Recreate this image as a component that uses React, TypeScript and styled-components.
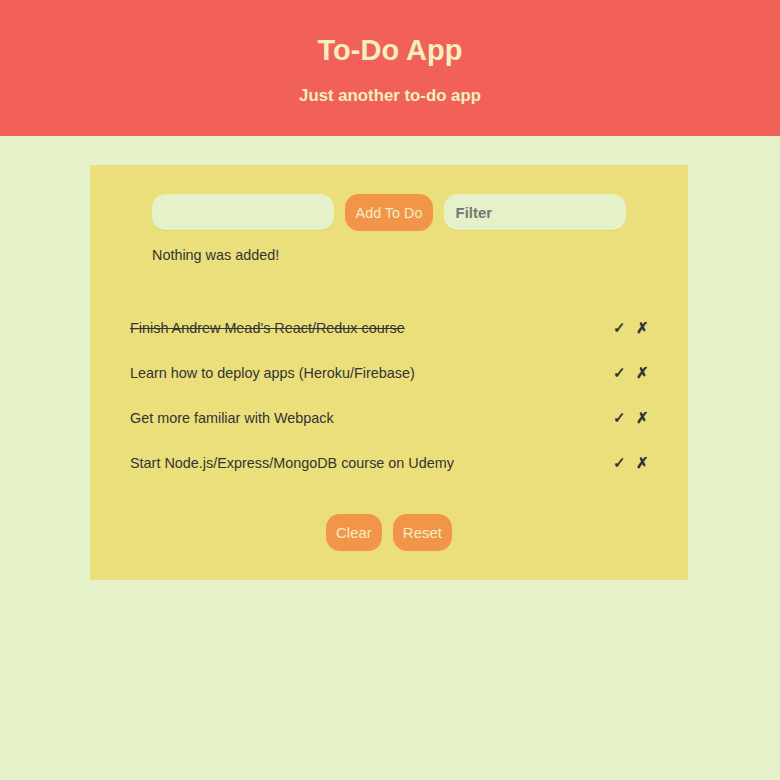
import React from 'react';
import styled, { createGlobalStyle } from 'styled-components';

const GlobalStyle = createGlobalStyle`
  body {
    margin: 0;
    background-color: #e5f1c9;
    font-family: "Liberation Sans", Arial, sans-serif;
    color: #333333;
  }
`;

const Header = styled.header`
  background-color: #f26157;
  color: #f5eec2;
  text-align: center;
  height: 136px;
  padding-top: 34px;
  box-sizing: border-box;
`;

const Title = styled.h1`
  margin: 0;
  font-size: 29px;
  font-weight: bold;
  line-height: 33px;
`;

const Subtitle = styled.h2`
  margin: 19px 0 0;
  font-size: 16.8px;
  font-weight: bold;
  line-height: 20px;
`;

const Panel = styled.main`
  width: 598px;
  margin: 29px 92px 0 90px;
  background-color: #ebdf7c;
  padding: 29px 40px;
  box-sizing: border-box;
`;

const FormRow = styled.form`
  display: flex;
  justify-content: center;
  gap: 11px;
`;

const Field = styled.input`
  width: 182px;
  height: 37px;
  box-sizing: border-box;
  border: none;
  border-bottom: 1px solid #e6d46a;
  border-radius: 14px;
  background-color: #e5f1c9;
  padding: 0 11px;
  font-family: inherit;
  font-size: 15px;
  font-weight: bold;
  color: #333333;
  outline: none;

  &::placeholder {
    color: #777777;
  }
`;

const Button = styled.button<{ $small?: boolean }>`
  height: 37px;
  padding: 0 ${(props): string => (props.$small ? '11px' : '10px')};
  border: none;
  border-radius: 14px;
  background-color: #f19549;
  color: #f5eec2;
  font-family: inherit;
  font-size: ${(props): string => (props.$small ? '14.4px' : '15px')};
  cursor: pointer;
`;

const Message = styled.p`
  margin: 15px 0 0 22px;
  font-size: 14.4px;
  line-height: 18px;
`;

const List = styled.ul`
  list-style: none;
  margin: 55px 0 0;
  padding: 0;
  display: flex;
  flex-direction: column;
  gap: 27px;
`;

const Item = styled.li`
  display: flex;
  justify-content: space-between;
  align-items: center;
  font-size: 14.4px;
  line-height: 18px;
`;

const ItemText = styled.span<{ $done: boolean }>`
  text-decoration: ${(props): string => (props.$done ? 'line-through' : 'none')};
`;

const Actions = styled.span`
  display: flex;
  gap: 11px;
  font-size: 15px;
  font-weight: bold;
`;

const Mark = styled.span`
  width: 12px;
  text-align: center;
`;

const Footer = styled.div`
  display: flex;
  justify-content: center;
  gap: 11px;
  margin-top: 42px;
`;

const todos = [
  { text: "Finish Andrew Mead's React/Redux course", done: true },
  { text: 'Learn how to deploy apps (Heroku/Firebase)', done: false },
  { text: 'Get more familiar with Webpack', done: false },
  { text: 'Start Node.js/Express/MongoDB course on Udemy', done: false },
];

const App: React.FC = () => (
  <>
    <GlobalStyle />
    <Header>
      <Title>To-Do App</Title>
      <Subtitle>Just another to-do app</Subtitle>
    </Header>
    <Panel>
      <FormRow onSubmit={(e): void => e.preventDefault()}>
        <Field type="text" />
        <Button type="submit" $small>
          Add To Do
        </Button>
        <Field type="text" placeholder="Filter" />
      </FormRow>
      <Message>Nothing was added!</Message>
      <List>
        {todos.map((todo) => (
          <Item key={todo.text}>
            <ItemText $done={todo.done}>{todo.text}</ItemText>
            <Actions>
              <Mark>✓</Mark>
              <Mark>✗</Mark>
            </Actions>
          </Item>
        ))}
      </List>
      <Footer>
        <Button>Clear</Button>
        <Button>Reset</Button>
      </Footer>
    </Panel>
  </>
);

export default App;
